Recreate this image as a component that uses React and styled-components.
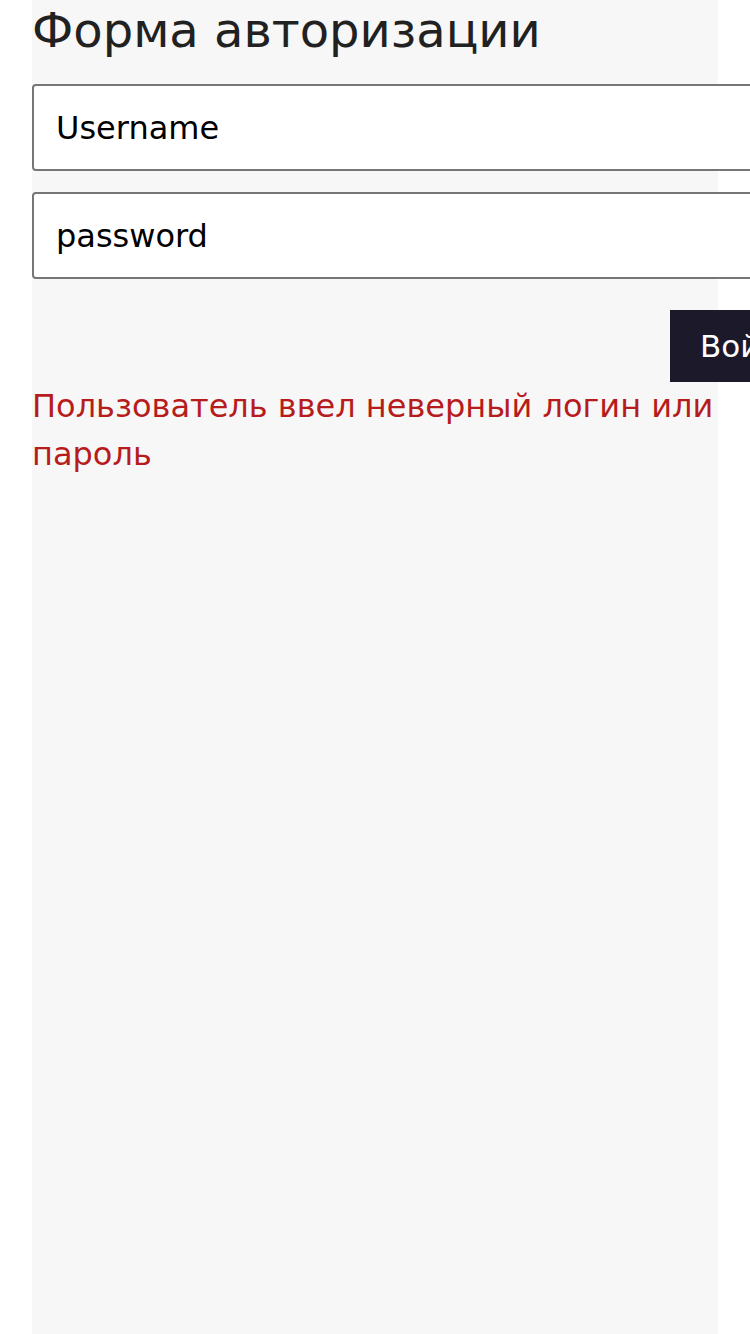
import React, { useState } from "react";
import styled, { createGlobalStyle } from "styled-components";

const GlobalStyle = createGlobalStyle`
  body {
    margin: 0;
    background: #ffffff;
    font-family: "DejaVu Sans", "Liberation Sans", sans-serif;
  }
`;

const LoginForm = () => {
  const [username, setUsername] = useState("");
  const [password, setPassword] = useState("");

  return (
    <Panel>
      <Title>Форма авторизации</Title>
      <Form onSubmit={(e) => e.preventDefault()}>
        <Input
          type="text"
          placeholder="Username"
          value={username}
          onChange={(e) => setUsername(e.target.value)}
        />
        <Input
          type="password"
          placeholder="password"
          value={password}
          onChange={(e) => setPassword(e.target.value)}
        />
        <Actions>
          <Button type="submit">Войти</Button>
        </Actions>
      </Form>
      <Error>Пользователь ввел неверный логин или пароль</Error>
    </Panel>
  );
};

export default function App() {
  return (
    <>
      <GlobalStyle />
      <LoginForm />
    </>
  );
}

const Panel = styled.div`
  margin: 0 32px;
  min-height: 1334px;
  background: #f7f7f7;
  box-sizing: border-box;
`;

const Title = styled.h1`
  margin: 0 0 24px;
  font-size: 48px;
  line-height: 60px;
  font-weight: 400;
  color: #212121;
`;

const Form = styled.form`
  display: flex;
  flex-direction: column;
  gap: 21px;
`;

const Input = styled.input`
  width: 100%;
  height: 83px;
  box-sizing: content-box;
  padding: 0 22px;
  border: 2px solid #767676;
  border-radius: 4px;
  background: #ffffff;
  font-family: "DejaVu Sans", sans-serif;
  font-size: 32px;
  color: #000000;
  outline: none;
  &::placeholder {
    color: #000000;
    opacity: 1;
  }
`;

const Actions = styled.div`
  display: flex;
  justify-content: flex-start;
  padding-left: 638px;
  margin-top: 10px;
`;

const Button = styled.button`
  flex-shrink: 0;
  height: 72px;
  padding: 0 30px;
  border: none;
  background: #1c1a2a;
  color: #ffffff;
  font-family: "DejaVu Sans", sans-serif;
  font-size: 31px;
  cursor: pointer;
`;

const Error = styled.p`
  margin: 0;
  font-size: 32px;
  line-height: 48px;
  color: #b71c1c;
`;
